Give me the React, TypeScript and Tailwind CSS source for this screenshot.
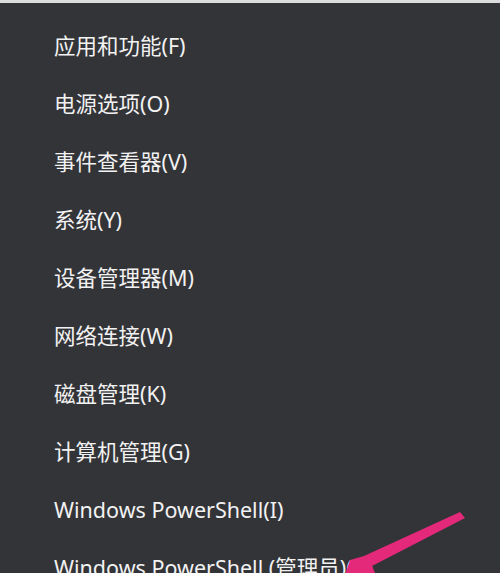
import React from 'react';

const items = [
  '应用和功能(F)',
  '电源选项(O)',
  '事件查看器(V)',
  '系统(Y)',
  '设备管理器(M)',
  '网络连接(W)',
  '磁盘管理(K)',
  '计算机管理(G)',
  'Windows PowerShell(I)',
  'Windows PowerShell (管理员)(A)',
];

function Arrow() {
  return (
    <svg className="absolute left-0 top-0" width="500" height="573" viewBox="0 0 500 573">
      <polygon points="460,512 465,518 372,566 378,580 340,590 350,560 364,556" fill="#e5297a" />
    </svg>
  );
}

export default function App() {
  return (
    <div className="relative w-[500px] h-[573px] overflow-hidden bg-[#333438] font-['Noto_Sans','Noto_Sans_CJK_SC',sans-serif] text-[#f2f2f2]">
      <div className="h-[3px] bg-[#dcdcdc]" />
      <ul className="pt-[14px] pl-[54px]">
        {items.map((t) => (
          <li key={t} className="h-[58px] flex items-center text-[21.5px] leading-none">
            {t}
          </li>
        ))}
      </ul>
      <Arrow />
    </div>
  );
}
